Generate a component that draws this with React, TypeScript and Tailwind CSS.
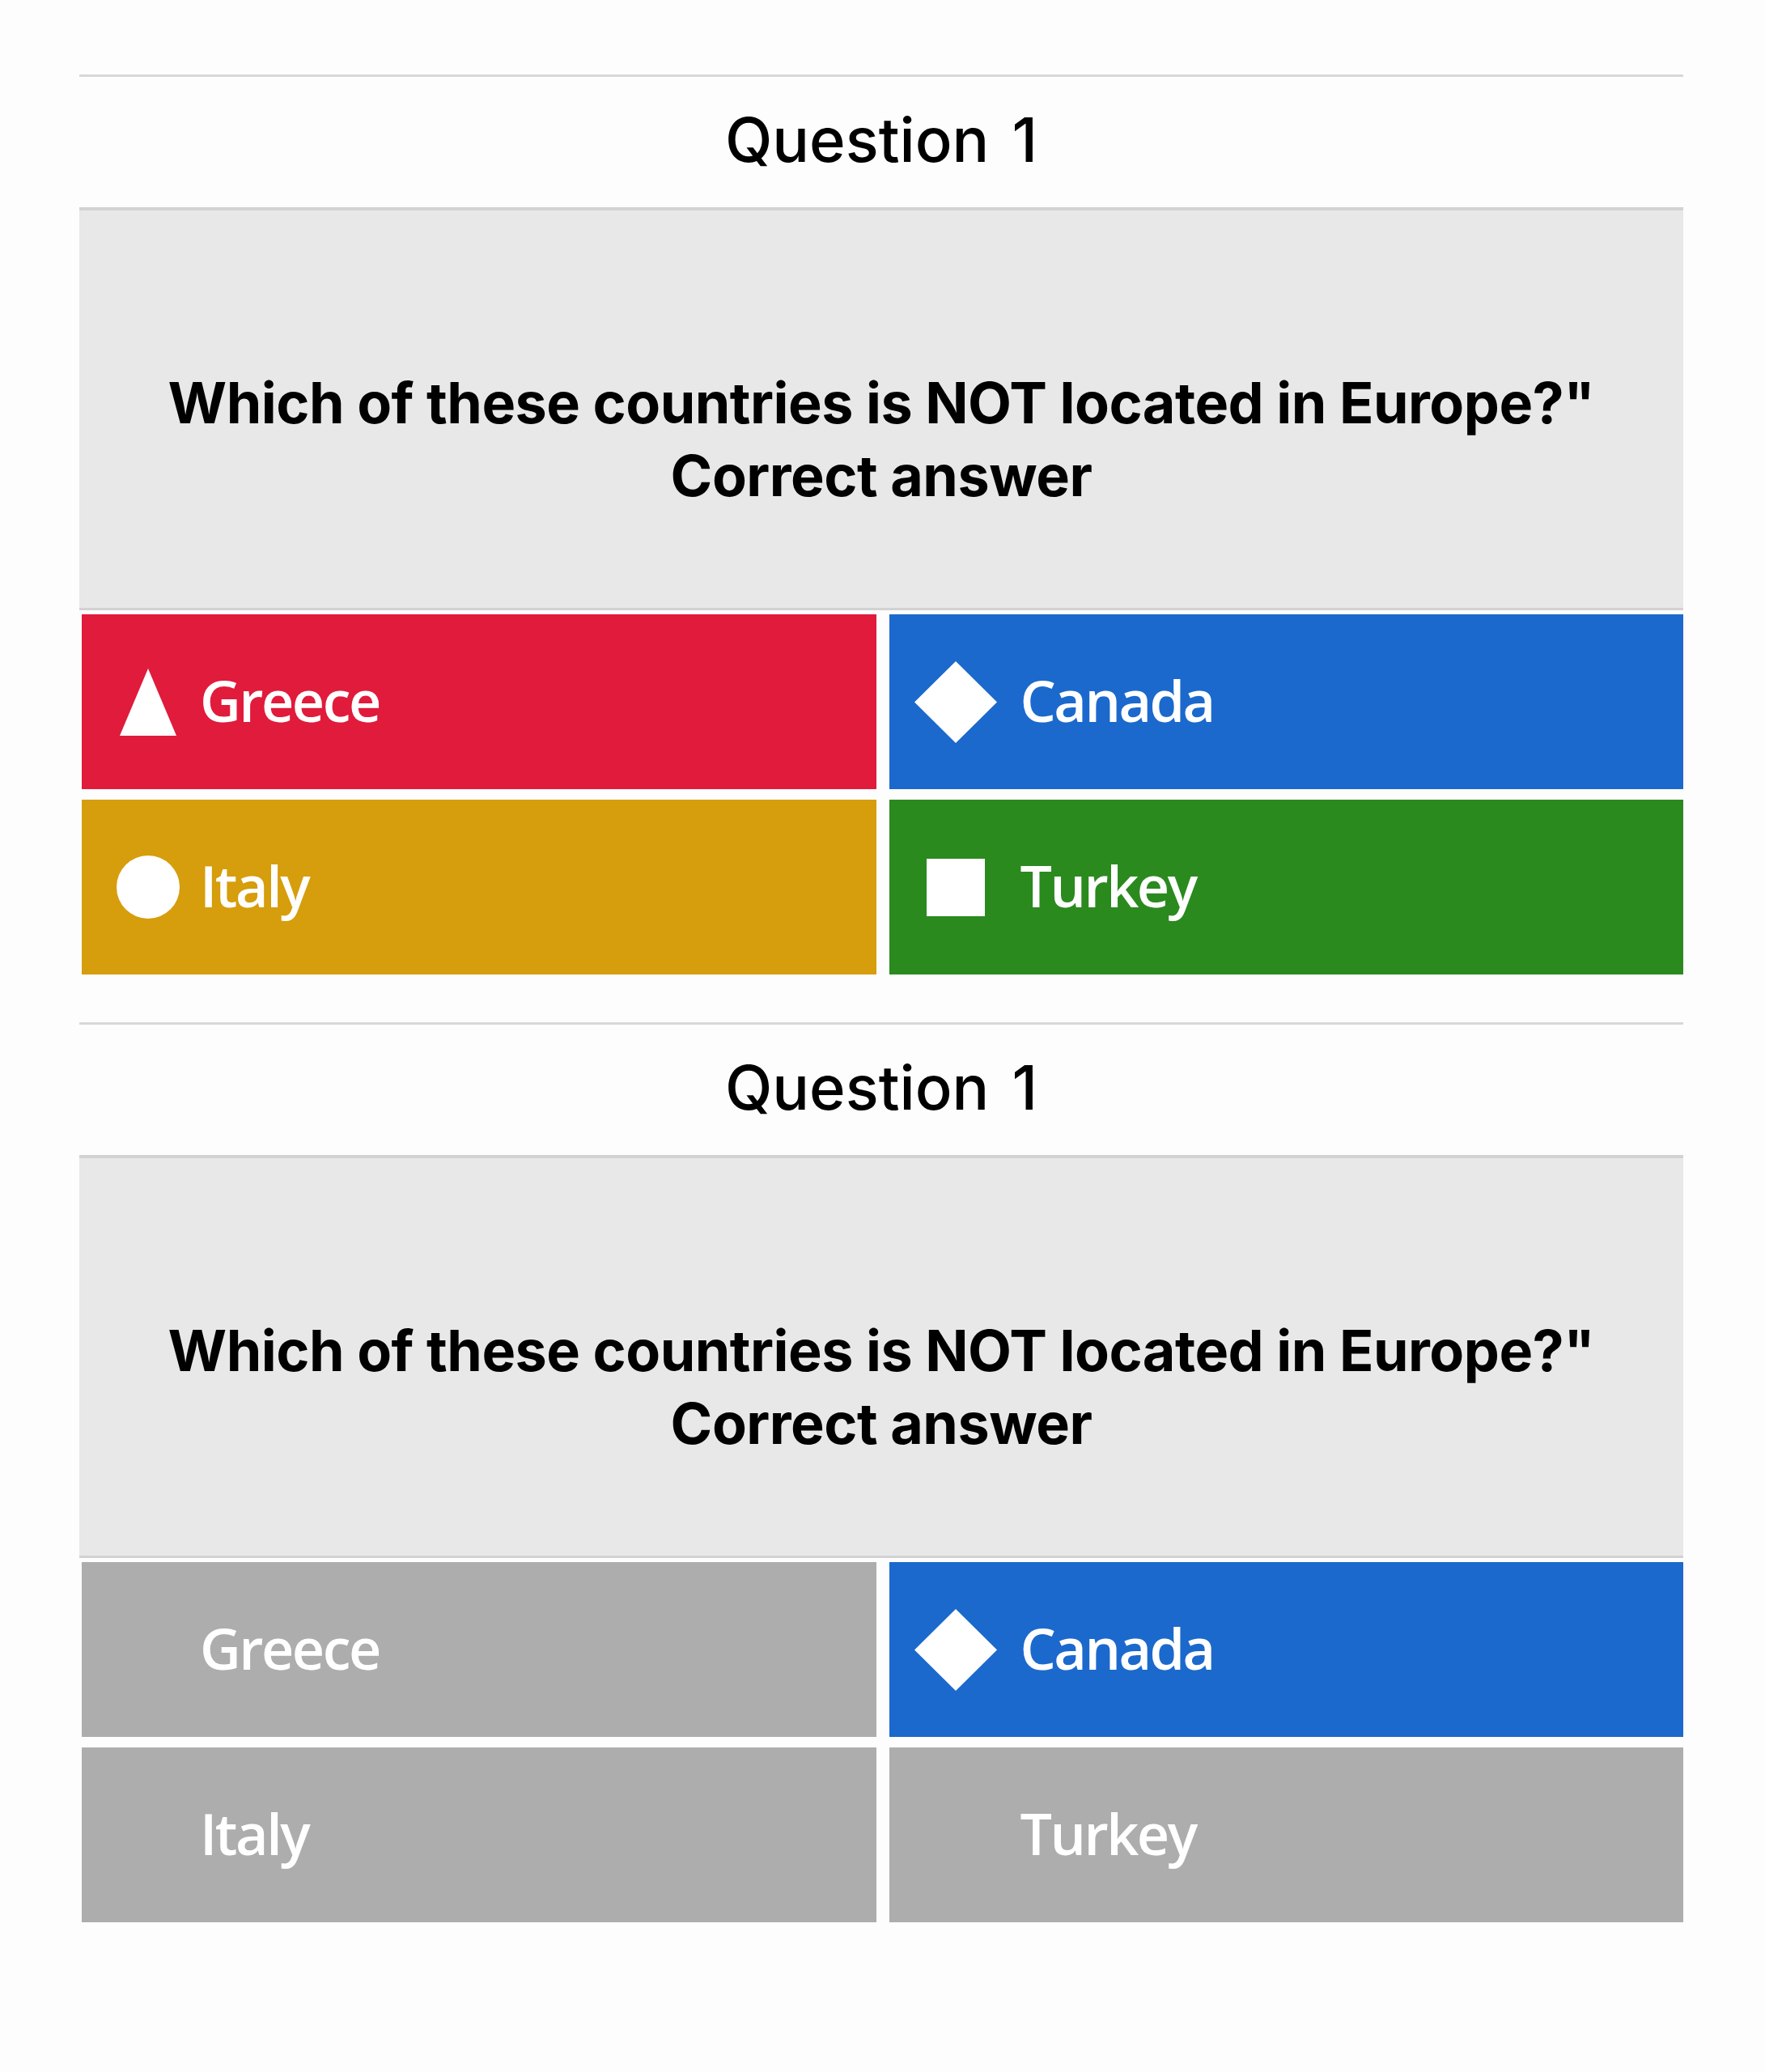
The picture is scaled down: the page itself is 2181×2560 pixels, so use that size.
import React from "react";

type Shape = "triangle" | "diamond" | "circle" | "square";

type Answer = {
    label: string;
    shape: Shape;
    color: string;
};

const ANSWERS: Answer[] = [
    { label: "Greece", shape: "triangle", color: "bg-[#e11b3b]" },
    { label: "Canada", shape: "diamond", color: "bg-[#1b69cd]" },
    { label: "Italy", shape: "circle", color: "bg-[#d69d0c]" },
    { label: "Turkey", shape: "square", color: "bg-[#2a8a1e]" },
];

const QUESTION = 'Which of these countries is NOT located in Europe?"';
const CORRECT = "Canada";

function ShapeIcon({ shape }: { shape: Shape }) {
    if (shape === "triangle") {
        return (
            <svg width="70" height="83" viewBox="0 0 70 83">
                <polygon points="35,0 70,83 0,83" fill="#ffffff" />
            </svg>
        );
    }
    if (shape === "diamond") {
        return (
            <svg width="102" height="101" viewBox="0 0 102 101">
                <polygon points="51,0 102,50.5 51,101 0,50.5" fill="#ffffff" />
            </svg>
        );
    }
    if (shape === "circle") {
        return <div className="w-[78px] h-[78px] rounded-full bg-white" />;
    }
    return <div className="w-[72px] h-[71px] bg-white" />;
}

function QuestionBlock({ reveal }: { reveal: boolean }) {
    return (
        <section className="border-t-[3px] border-[#d8d8d8]">
            <div className="h-[161px] flex items-center justify-center pb-[8px]">
                <h2
                    className="text-[76px] font-medium text-black leading-none [word-spacing:8px]"
                    style={{ fontFamily: "Inter, 'Noto Sans', sans-serif" }}
                >
                    Question 1
                </h2>
            </div>

            <div className="h-[498px] bg-[#e8e8e8] border-t-4 border-b-[3px] border-[#d2d2d2] flex items-center justify-center px-10 pt-[74px]">
                <p
                    className="text-center text-[70px] font-bold text-black leading-[90px] tracking-[-0.5px]"
                    style={{ fontFamily: "Inter, 'Noto Sans', sans-serif" }}
                >
                    {QUESTION}
                    <br />
                    Correct answer
                </p>
            </div>

            <div className="grid grid-cols-2 gap-x-[16px] gap-y-[13px] pl-[3px] mt-[5px]">
                {ANSWERS.map((a, i) => {
                    // after reveal only the correct answer keeps its colour and shape
                    const active = !reveal || a.label === CORRECT;
                    return (
                        <div
                            key={a.label}
                            className={`h-[216px] flex items-center pl-[30px] ${active ? a.color : "bg-[#adadad]"}`}
                        >
                            <div className="w-[104px] flex items-center justify-center">
                                {active && <ShapeIcon shape={a.shape} />}
                            </div>
                            <span
                                className={`text-[70px] font-semibold text-white leading-none tracking-[-2.5px] pb-[4px] ${i % 2 === 0 ? "ml-[12px]" : "ml-[28px]"}`}
                                style={{ fontFamily: "'Open Sans', 'Noto Sans', sans-serif" }}
                            >
                                {a.label}
                            </span>
                        </div>
                    );
                })}
            </div>
        </section>
    );
}

export default function App() {
    return (
        <div className="min-h-[2560px] w-full bg-[#fdfdfd] pt-[92px]">
            <div className="ml-[98px] w-[1982px] flex flex-col gap-[59px]">
                <QuestionBlock reveal={false} />
                <QuestionBlock reveal={true} />
            </div>
        </div>
    );
}
